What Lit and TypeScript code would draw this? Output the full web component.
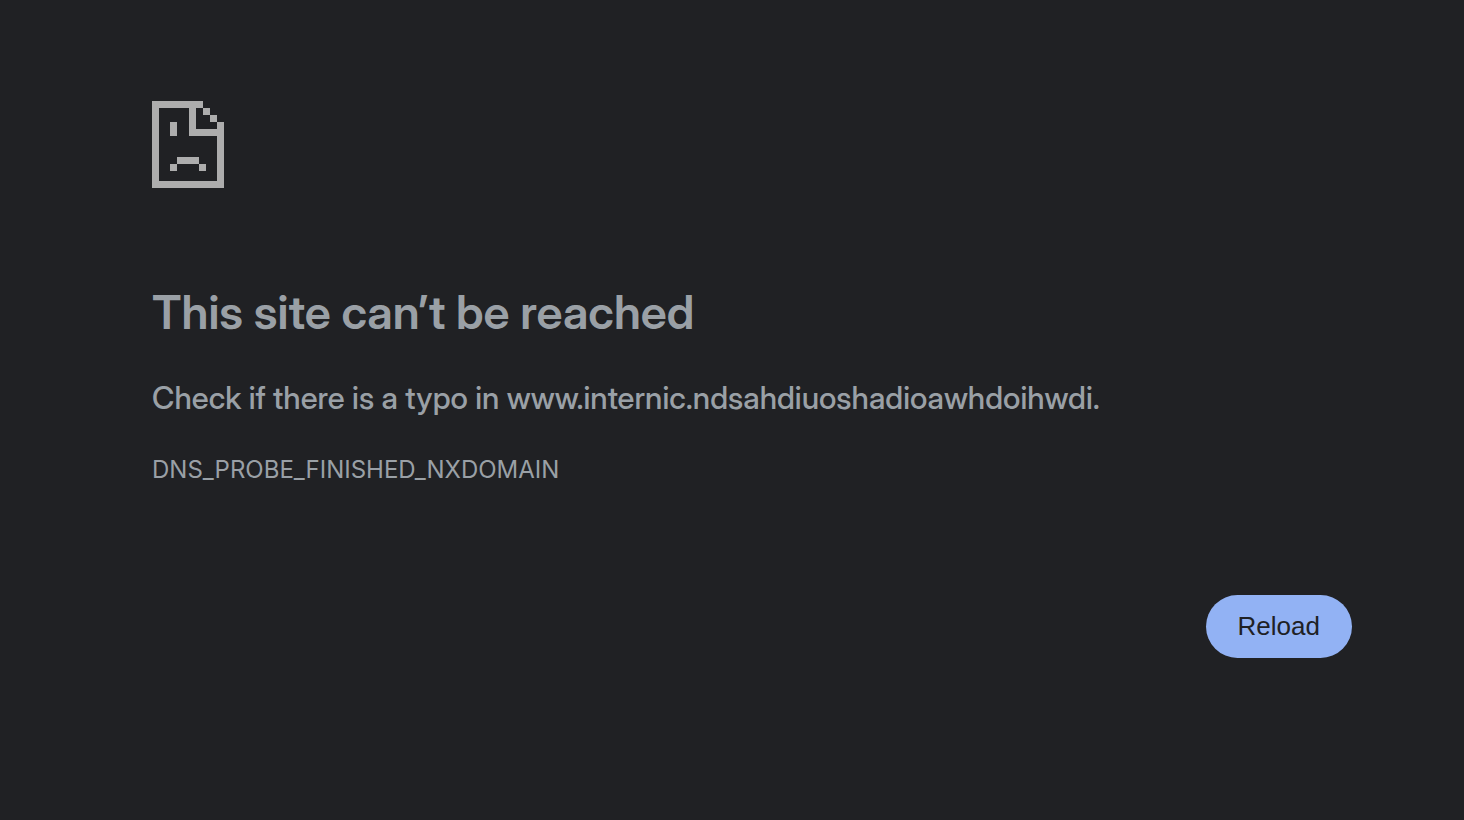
import { LitElement, html, css } from "lit";
import { customElement } from "lit/decorators.js";

@customElement("app-root")
class AppRoot extends LitElement {
  static styles = css`
    :host {
      display: block;
      box-sizing: border-box;
      min-height: 100vh;
      padding: 101px 112px 96px 152px;
      background: #202124;
      color: #9aa0a6;
      font-family: Inter, "Liberation Sans", sans-serif;
    }
    main {
      max-width: 1200px;
      margin: 0 auto;
    }
    .icon {
      display: block;
      width: 72px;
      height: 87px;
      fill: #adadad;
    }
    h1,
    .summary {
      font-family: "Inter Display", Inter, "Liberation Sans", sans-serif;
    }
    h1 {
      margin: 96px 0 34px;
      font-size: 47px;
      line-height: 56px;
      font-weight: 600;
    }
    p {
      margin: 0;
      font-size: 31px;
      line-height: 48px;
    }
    .summary {
      font-weight: 500;
    }
    .code {
      margin-top: 24px;
      font-size: 24px;
    }
    .actions {
      display: flex;
      justify-content: flex-end;
      margin-top: 101px;
    }
    button {
      padding: 16px 32px;
      border: 0;
      border-radius: 32px;
      background: #92b2f4;
      color: #202124;
      font: 26px/31px "Liberation Sans", sans-serif;
    }
  `;

  render() {
    return html`
      <main>
        <svg class="icon" viewBox="0 0 72 87" shape-rendering="crispEdges" aria-hidden="true">
          <path d="M0 0h51v7H7v73h58V35H37V7h7v21h21v-7h7v66H0zM51 7h7v7h-7zM58 14h7v7h-7zM18 21h7v14h-7zM25 56h22v7H25zM18 63h7v7h-7zM47 63h7v7h-7z" />
        </svg>
        <h1>This site can’t be reached</h1>
        <p class="summary">Check if there is a typo in www.internic.ndsahdiuoshadioawhdoihwdi.</p>
        <p class="code">DNS_PROBE_FINISHED_NXDOMAIN</p>
        <div class="actions"><button type="button">Reload</button></div>
      </main>
    `;
  }
}
